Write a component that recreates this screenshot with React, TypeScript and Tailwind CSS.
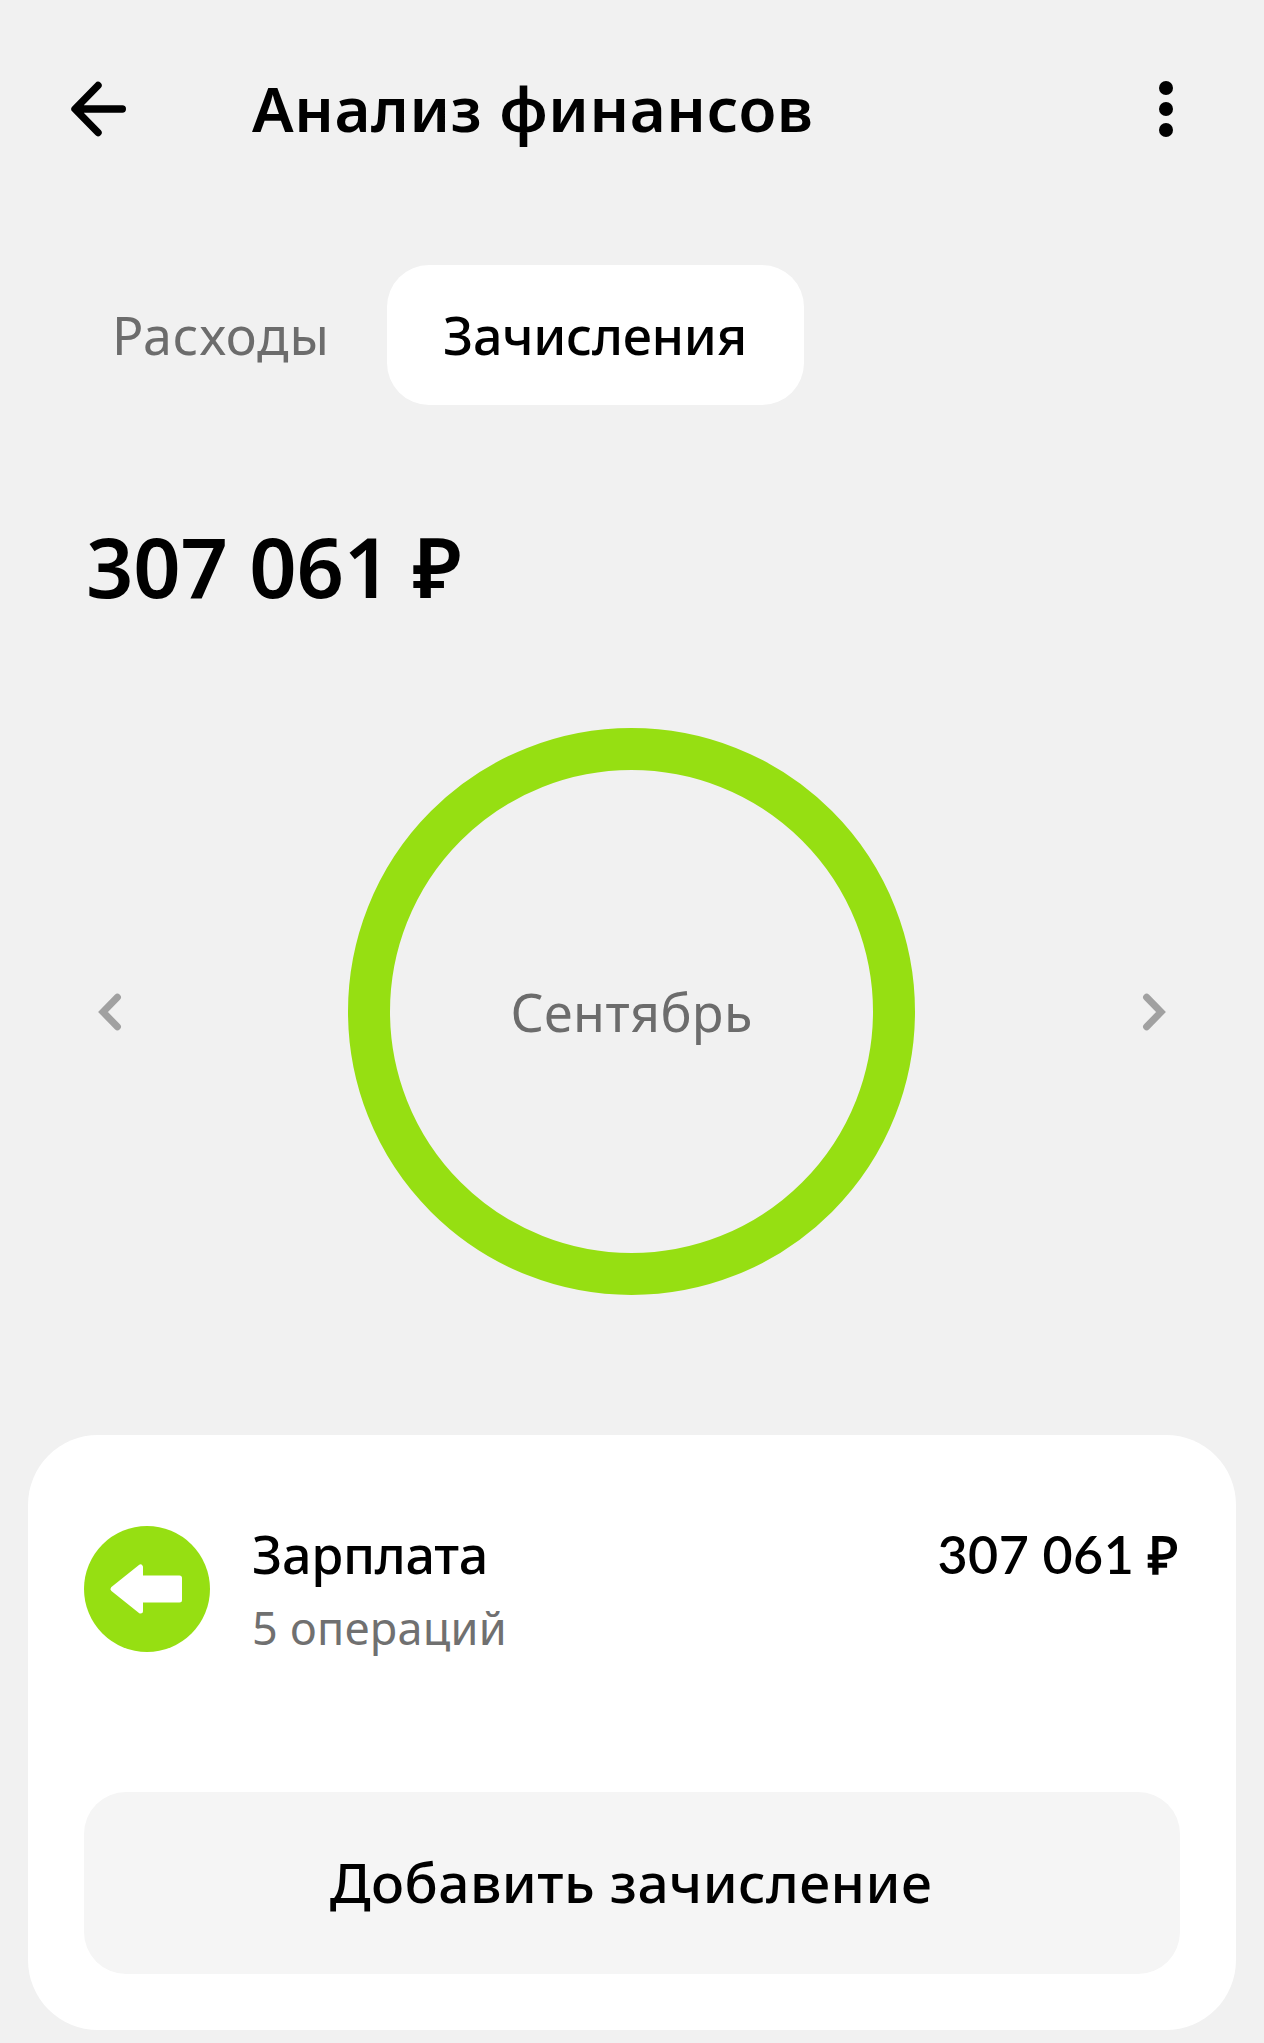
import { useState } from "react";

type TabType = 'expenses' | 'income';

const BackIcon = () => (
    <svg width="64" height="64" viewBox="0 0 64 64" fill="none" stroke="#000" strokeWidth="7.4" strokeLinecap="round" strokeLinejoin="round">
        <path d="M58.3 32H12M34 8.5L11 32l23 23.5" />
    </svg>
);

const MoreIcon = () => (
    <svg width="64" height="64" viewBox="0 0 64 64" fill="#000">
        <circle cx="32" cy="11" r="7" />
        <circle cx="32" cy="32" r="7" />
        <circle cx="32" cy="53" r="7" />
    </svg>
);

const ChevronIcon = ({ className }: { className?: string }) => (
    <svg className={className} width="40" height="40" viewBox="0 0 40 40" fill="none" stroke="#a1a1a1" strokeWidth="7" strokeLinecap="round">
        <path d="M27.4 5.3L13 20l14.4 14.7" />
    </svg>
);

const SalaryIcon = () => (
    <svg className="shrink-0" width="126" height="126" viewBox="0 0 126 126">
        <circle cx="63" cy="63" r="63" fill="#96df12" />
        <path
            d="M29 63L56.5 41v11H95.5v22H56.5v11z"
            fill="#fff"
            stroke="#fff"
            strokeWidth="5"
            strokeLinejoin="round"
        />
    </svg>
);

export default function App() {
    const [tab, setTab] = useState<TabType>('income');

    return (
        <div className="flex flex-col w-full h-[2043px] bg-[#f1f1f1] text-black font-['Noto_Sans',sans-serif] whitespace-nowrap">

            {/* header */}
            <header className="flex items-center h-[218px] pl-16 pr-[66px]">
                <button><BackIcon /></button>
                <h1 className="flex-1 pl-[124px] pb-[2px] text-[62px] leading-none font-semibold tracking-[0.6px]">Анализ финансов</h1>
                <button><MoreIcon /></button>
            </header>

            {/* tabs */}
            <div className="flex mt-[47px] h-[140px] pl-[54px] text-[52px]">
                <button
                    onClick={() => setTab('expenses')}
                    className={`w-[333px] pl-[58px] text-left rounded-[42px] tracking-[0.9px] ${tab === 'expenses' ? 'bg-white font-medium' : 'text-[#6c6c6c]'}`}
                >
                    Расходы
                </button>
                <button
                    onClick={() => setTab('income')}
                    className={`w-[417px] pl-14 text-left rounded-[42px] tracking-[-0.3px] ${tab === 'income' ? 'bg-white font-medium' : 'text-[#6c6c6c]'}`}
                >
                    Зачисления
                </button>
            </div>

            {/* total */}
            <p className="mt-[111px] pl-[86px] text-[83px] leading-[100px] font-semibold tracking-[-0.2px]">307 061 ₽</p>

            {/* month chart */}
            <div className="flex items-center justify-between mt-[112px] h-[567px] px-[90px]">
                <button><ChevronIcon /></button>
                <div className="flex items-center justify-center mr-px size-[567px] rounded-full border-[42px] border-[#96df12]">
                    <span className="pt-px text-[52px] text-[#6c6c6c] tracking-[0.4px]">Сентябрь</span>
                </div>
                <button><ChevronIcon className="rotate-180" /></button>
            </div>

            {/* operations */}
            <div className="mt-[140px] mx-7 h-[595px] px-14 pt-[91px] bg-white rounded-[70px]">
                <div className="flex h-[126px]">
                    <SalaryIcon />
                    <div className="flex-1 pl-[42px]">
                        <p className="text-[52px] leading-[56px] font-medium tracking-[-0.3px]">Зарплата</p>
                        <p className="mt-[15px] text-[45px] leading-[61px] text-[#707070] tracking-[0.3px]">5 операций</p>
                    </div>
                    <p className="mr-0.5 font-['Lato',sans-serif] text-[52px] leading-[57px] font-semibold tracking-[0.4px]">307 061 ₽</p>
                </div>

                <button className="mt-[140px] w-full h-[182px] pb-[2px] pr-[2px] bg-[#f5f5f5] rounded-[42px] text-[55px] font-medium tracking-[0.4px]">
                    Добавить зачисление
                </button>
            </div>
        </div>
    );
}
